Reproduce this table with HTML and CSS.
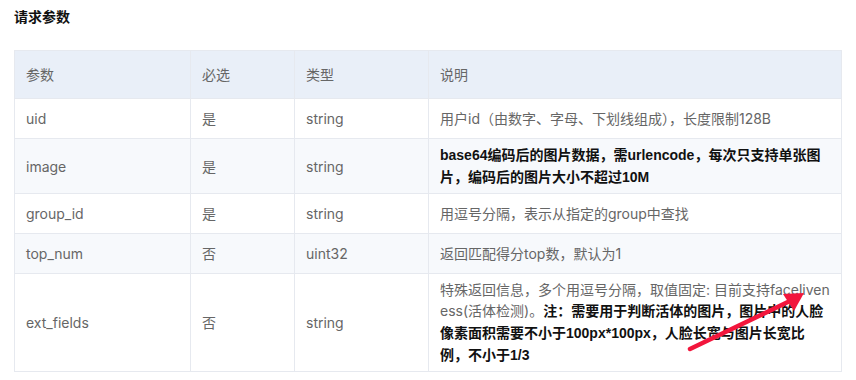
FILE: index.html
```html
<!DOCTYPE html>
<html lang="zh-CN">
<head>
<meta charset="utf-8">
<link rel="stylesheet" href="styles.css">
</head>
<body>
<div class="page">
  <h3 class="title">请求参数</h3>
  <table class="params">
    <colgroup>
      <col class="c1"><col class="c2"><col class="c3"><col class="c4">
    </colgroup>
    <thead>
      <tr><th>参数</th><th>必选</th><th>类型</th><th>说明</th></tr>
    </thead>
    <tbody>
      <tr><td>uid</td><td>是</td><td>string</td><td>用户id（由数字、字母、下划线组成），长度限制128B</td></tr>
      <tr><td>image</td><td>是</td><td>string</td><td><strong>base64编码后的图片数据，需urlencode，每次只支持单张图片，编码后的图片大小不超过10M</strong></td></tr>
      <tr><td>group_id</td><td>是</td><td>string</td><td>用逗号分隔，表示从指定的group中查找</td></tr>
      <tr><td>top_num</td><td>否</td><td>uint32</td><td>返回匹配得分top数，默认为1</td></tr>
      <tr><td>ext_fields</td><td>否</td><td>string</td><td>特殊返回信息，多个用逗号分隔，取值固定: 目前支持faceliveness(活体检测)。<strong>注：需要用于判断活体的图片，图片中的人脸像素面积需要不小于100px*100px，人脸长宽与图片长宽比例，不小于1/3</strong></td></tr>
    </tbody>
  </table>
  <svg class="arrow" width="856" height="380" viewBox="0 0 856 380">
    <line x1="690" y1="349" x2="792" y2="300" stroke="#f2163c" stroke-width="4.5" stroke-linecap="round"/>
    <polygon points="804,293 783,294 794,311" fill="#f2163c"/>
  </svg>
</div>
</body>
</html>
```
FILE: styles.css
```css
* { box-sizing: border-box; }
html, body { margin: 0; padding: 0; background: #fff; }
body {
  font-family: "Inter", "Noto Sans CJK SC", sans-serif;
  font-size: 14px;
  color: #666;
}
.page {
  position: relative;
  width: 856px;
  height: 380px;
  padding: 8px 14px 0 14px;
}
.title {
  margin: 0;
  font-size: 14px;
  line-height: 16px;
  font-weight: 700;
  color: #111;
  font-family: "Noto Sans CJK SC", sans-serif;
}
.params {
  margin-top: 26px;
  width: 827px;
  border-collapse: collapse;
  table-layout: fixed;
}
.c1 { width: 176px; }
.c2 { width: 104px; }
.c3 { width: 134px; }
.c4 { width: 413px; }
.params th, .params td {
  border: 1px solid #e6e9ef;
  padding: 5px 11px 5px 11px;
  text-align: left;
  vertical-align: middle;
  line-height: 21px;
  font-weight: 400;
}
.params th {
  background: #e9eff8;
  color: #666;
  height: 48px;
}
.params td { height: 40px; word-break: break-all; }
.params tbody tr:nth-child(even) td { background: #f7f9fc; }
.params strong {
  color: #111;
  font-weight: 700;
  font-family: "Liberation Sans", "Noto Sans CJK SC", sans-serif;
}
.arrow {
  position: absolute;
  left: 0;
  top: 0;
  pointer-events: none;
}
```
